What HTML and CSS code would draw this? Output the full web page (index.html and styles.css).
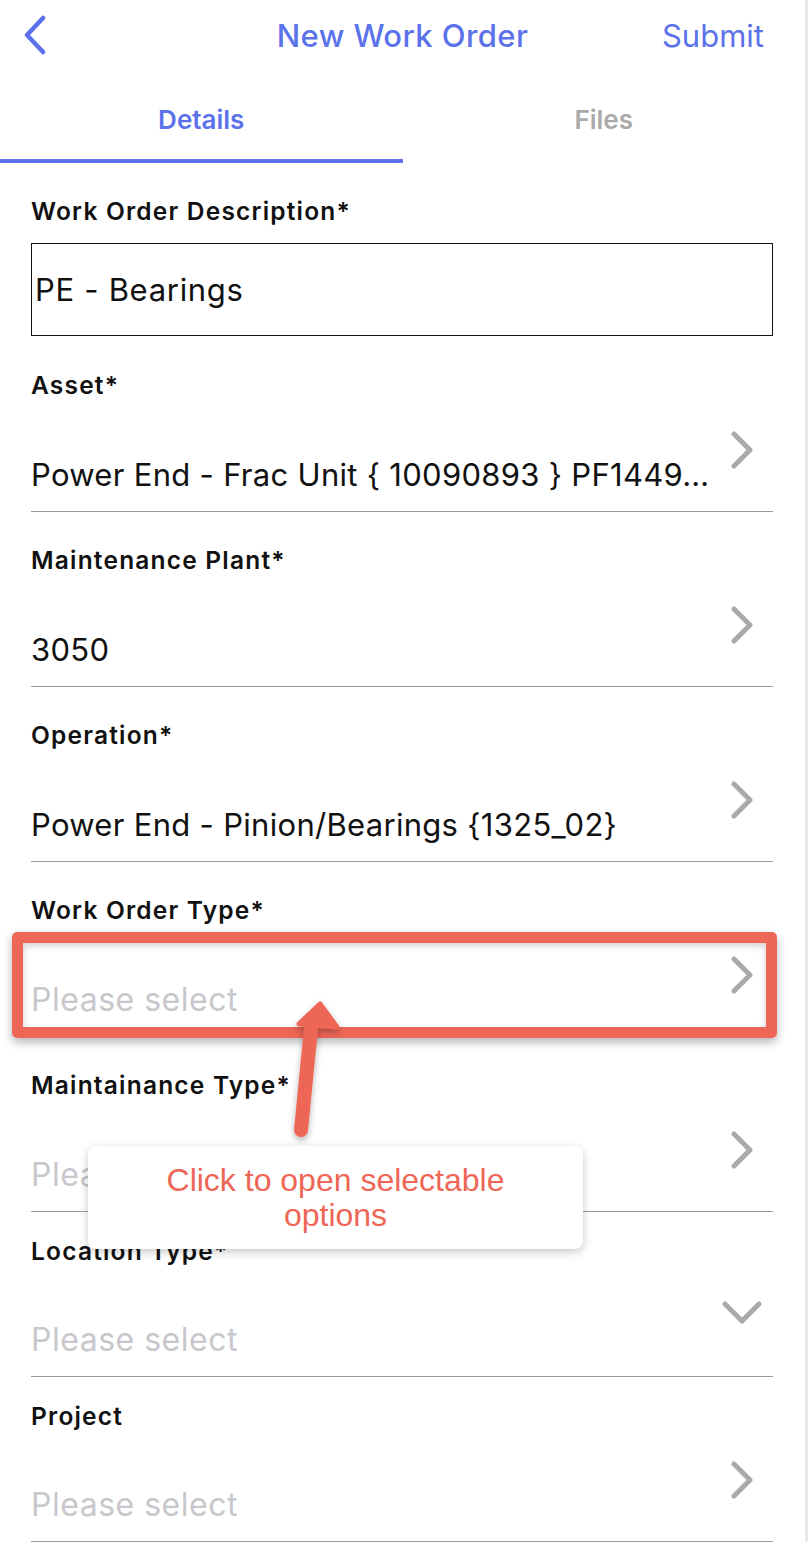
FILE: index.html
```html
<!DOCTYPE html>
<html>
<head>
<meta charset="utf-8">
<link rel="stylesheet" href="styles.css">
</head>
<body>
<div class="app">
  <header class="nav">
    <div class="nav-left">
      <svg class="back" width="24" height="40" viewBox="0 0 24 40"><polyline points="20,3 4,20 20,37" fill="none" stroke="#5b72ea" stroke-width="4.5" stroke-linecap="round" stroke-linejoin="round"/></svg>
    </div>
    <div class="nav-title">New Work Order</div>
    <div class="nav-right">Submit</div>
  </header>
  <div class="tabs">
    <div class="tab active">Details</div>
    <div class="tab">Files</div>
  </div>
  <main class="form">
    <div class="field first">
      <div class="label">Work Order Description*</div>
      <div class="textbox">PE - Bearings</div>
    </div>
    <div class="field gap-lg">
      <div class="label">Asset*</div>
      <div class="value-row">
        <span class="value">Power End - Frac Unit { 10090893 } PF1449…</span>
        <svg class="chev" width="22" height="38" viewBox="0 0 22 38"><polyline points="3,3 19,19 3,35" fill="none" stroke="#aaaaaa" stroke-width="5" stroke-linecap="round" stroke-linejoin="round"/></svg>
      </div>
    </div>
    <div class="field">
      <div class="label">Maintenance Plant*</div>
      <div class="value-row">
        <span class="value">3050</span>
        <svg class="chev" width="22" height="38" viewBox="0 0 22 38"><polyline points="3,3 19,19 3,35" fill="none" stroke="#aaaaaa" stroke-width="5" stroke-linecap="round" stroke-linejoin="round"/></svg>
      </div>
    </div>
    <div class="field">
      <div class="label">Operation*</div>
      <div class="value-row">
        <span class="value">Power End - Pinion/Bearings {1325_02}</span>
        <svg class="chev" width="22" height="38" viewBox="0 0 22 38"><polyline points="3,3 19,19 3,35" fill="none" stroke="#aaaaaa" stroke-width="5" stroke-linecap="round" stroke-linejoin="round"/></svg>
      </div>
    </div>
    <div class="field">
      <div class="label">Work Order Type*</div>
      <div class="value-row">
        <span class="value placeholder">Please select</span>
        <svg class="chev" width="22" height="38" viewBox="0 0 22 38"><polyline points="3,3 19,19 3,35" fill="none" stroke="#aaaaaa" stroke-width="5" stroke-linecap="round" stroke-linejoin="round"/></svg>
      </div>
    </div>
    <div class="field">
      <div class="label">Maintainance Type*</div>
      <div class="value-row">
        <span class="value placeholder">Please select</span>
        <svg class="chev" width="22" height="38" viewBox="0 0 22 38"><polyline points="3,3 19,19 3,35" fill="none" stroke="#aaaaaa" stroke-width="5" stroke-linecap="round" stroke-linejoin="round"/></svg>
      </div>
    </div>
    <div class="field tight">
      <div class="label">Location Type*</div>
      <div class="value-row">
        <span class="value placeholder">Please select</span>
        <svg class="chev-down" width="40" height="24" viewBox="0 0 40 24"><polyline points="3,3 20,20 37,3" fill="none" stroke="#aaaaaa" stroke-width="5" stroke-linecap="round" stroke-linejoin="round"/></svg>
      </div>
    </div>
    <div class="field tight">
      <div class="label">Project</div>
      <div class="value-row">
        <span class="value placeholder">Please select</span>
        <svg class="chev" width="22" height="38" viewBox="0 0 22 38"><polyline points="3,3 19,19 3,35" fill="none" stroke="#aaaaaa" stroke-width="5" stroke-linecap="round" stroke-linejoin="round"/></svg>
      </div>
    </div>
  </main>

  <div class="highlight"></div>
  <svg class="pointer" width="80" height="160" viewBox="280 990 80 160">
    <g fill="#ee6655" stroke="#ee6655" stroke-linejoin="round" filter="url(#sh)">
      <line x1="301" y1="1130" x2="312" y2="1018" stroke-width="14" stroke-linecap="round"/>
      <polygon points="320,1004 299,1024 337,1027" stroke-width="5"/>
    </g>
    <defs>
      <filter id="sh" x="-50%" y="-20%" width="200%" height="140%">
        <feDropShadow dx="0" dy="3" stdDeviation="3" flood-color="#000" flood-opacity="0.3"/>
      </filter>
    </defs>
  </svg>
  <div class="tooltip">Click to open selectable<br>options</div>
</div>
</body>
</html>
```

FILE: styles.css
```css
html, body {
  margin: 0;
  padding: 0;
  background: #ffffff;
}

.app {
  position: relative;
  width: 805px;
  min-height: 1542px;
  border-right: 3px solid #e8e8e8;
  font-family: "Inter", "Roboto", "Liberation Sans", sans-serif;
  color: #111111;
  overflow: hidden;
}

.nav {
  height: 70px;
  display: grid;
  grid-template-columns: 1fr auto 1fr;
  align-items: center;
}

.nav-left {
  padding-left: 23px;
  display: flex;
  align-items: center;
}

.back {
  display: block;
}

.nav-title {
  font-size: 31px;
  font-weight: 500;
  color: #5b72ea;
  letter-spacing: 0.4px;
}

.nav-right {
  justify-self: end;
  padding-right: 41px;
  font-size: 31px;
  color: #5b72ea;
}

.tabs {
  display: flex;
}

.tab {
  flex: 1;
  height: 93px;
  box-sizing: border-box;
  padding-top: 35px;
  line-height: 30px;
  text-align: center;
  font-size: 26px;
  font-weight: 600;
  color: #aaaaaa;
  border-bottom: 4px solid transparent;
}

.tab.active {
  color: #5b72ea;
  border-bottom-color: #5b72ea;
}

.form {
  padding: 0 32px 0 31px;
}

.field {
  margin-top: 33px;
}

.field.first {
  margin-top: 33px;
}

.field.gap-lg {
  margin-top: 34px;
}

.field.tight {
  margin-top: 24px;
}

.label {
  font-size: 24.5px;
  line-height: 30px;
  font-weight: 600;
  letter-spacing: 1.2px;
}

.textbox {
  margin-top: 17px;
  height: 91px;
  border: 1.5px solid #111111;
  display: flex;
  align-items: center;
  padding-left: 3px;
  font-size: 31px;
  letter-spacing: 0.7px;
}

.value-row {
  height: 93px;
  padding-bottom: 18px;
  border-bottom: 1.5px solid #9a9a9a;
  display: flex;
  align-items: flex-end;
  justify-content: space-between;
}

.field.tight .value-row {
  height: 92px;
}

.value {
  font-size: 31px;
  line-height: 36px;
  letter-spacing: 0.3px;
  white-space: nowrap;
}

.value.placeholder {
  font-size: 32px;
  letter-spacing: 0.5px;
  color: #c7c7cc;
}

.chev {
  display: block;
  margin: 0 20px 24px 0;
}

.chev-down {
  display: block;
  margin: 0 11px 33px 0;
}

.highlight {
  position: absolute;
  left: 12px;
  top: 932px;
  width: 743px;
  height: 84px;
  border: 11px solid #ee6655;
  border-radius: 5px;
  box-shadow: 0 4px 10px rgba(0, 0, 0, 0.3), inset 0 3px 7px rgba(0, 0, 0, 0.18);
}

.pointer {
  position: absolute;
  left: 280px;
  top: 990px;
}

.tooltip {
  position: absolute;
  left: 88px;
  top: 1146px;
  width: 495px;
  height: 103px;
  background: #ffffff;
  border-radius: 8px;
  box-shadow: 0 3px 10px rgba(0, 0, 0, 0.22);
  display: flex;
  align-items: center;
  justify-content: center;
  text-align: center;
  font-family: "Liberation Sans", Arial, sans-serif;
  font-size: 32px;
  line-height: 35px;
  color: #ee6655;
}
```
